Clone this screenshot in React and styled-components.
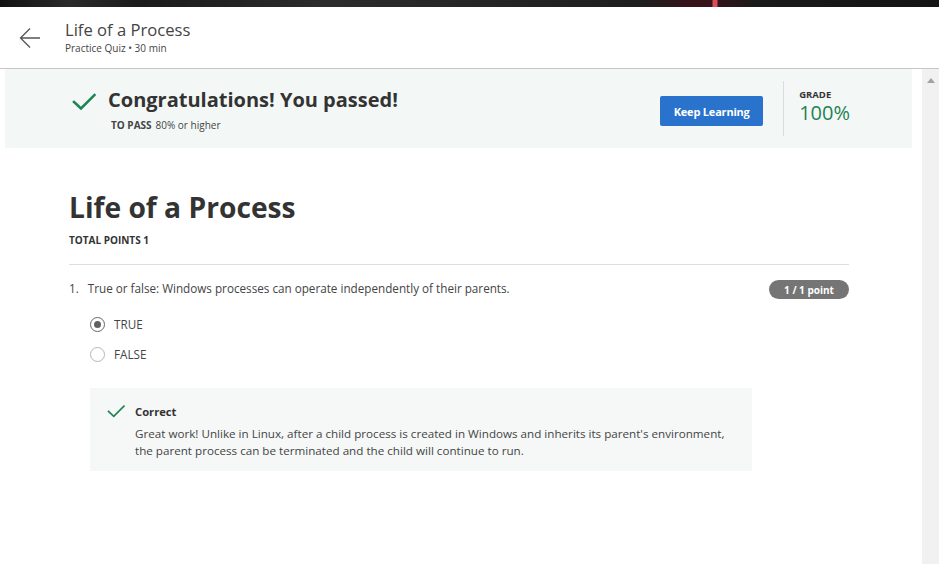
import React from 'react'
import styled, { createGlobalStyle } from 'styled-components'

const Global = createGlobalStyle`
  html, body {
    margin: 0;
    padding: 0;
    background: #fff;
  }
  body {
    width: 939px;
    height: 564px;
    overflow: hidden;
    font-family: 'Open Sans', 'Liberation Sans', sans-serif;
    color: #333;
  }
`

const Page = styled.div`
  display: flex;
  flex-direction: column;
  height: 564px;
`

const TopStrip = styled.div`
  height: 7px;
  flex: none;
  background:
    linear-gradient(90deg, transparent 0, transparent 712px, #e0485c 713px, #e0485c 717px, transparent 718px),
    linear-gradient(90deg, #111 0, #2a2a2a 70px, #1b1b1b 140px, #2c2c2c 330px, #1e1e1e 640px, #3a1218 700px, #1a1a1a 760px, #141414 100%);
`

const Header = styled.header`
  height: 61px;
  flex: none;
  display: flex;
  align-items: center;
  border-bottom: 1px solid #c6c6c6;
`

const BackButton = styled.button`
  width: 65px;
  height: 60px;
  padding: 0 0 0 19px;
  border: 0;
  background: none;
  display: flex;
  align-items: center;
  color: #555;
  cursor: pointer;
`

const HeaderText = styled.div`
  display: flex;
  flex-direction: column;
  margin-top: -2px;
`

const HeaderTitle = styled.div`
  font-size: 16.6px;
  line-height: 22px;
  font-weight: 400;
  color: #444;
`

const HeaderSub = styled.div`
  font-size: 10px;
  line-height: 13px;
  color: #444;
  margin-top: 1px;
`

const Body = styled.div`
  flex: 1;
  display: flex;
  min-height: 0;
`

const Content = styled.main`
  flex: 1;
  display: flex;
  flex-direction: column;
`

const Scrollbar = styled.div`
  width: 17px;
  flex: none;
  background: #f1f1f1;
  display: flex;
  justify-content: center;
  padding-top: 9px;
  box-sizing: border-box;
`

const ScrollArrow = styled.div`
  width: 0;
  height: 0;
  border-left: 4px solid transparent;
  border-right: 4px solid transparent;
  border-bottom: 5px solid #a3a3a3;
`

const Banner = styled.section`
  height: 79px;
  flex: none;
  margin: 0 10px 0 5px;
  background: #f3f8f6;
  display: flex;
  align-items: flex-start;
  padding: 0 62px 0 67px;
`

const PassBlock = styled.div`
  display: flex;
  align-items: flex-start;
  gap: 12px;
  margin-top: 18px;
`

const CheckWrap = styled.div`
  margin-top: 6px;
  display: flex;
`

const PassText = styled.div`
  display: flex;
  flex-direction: column;
`

const PassTitle = styled.div`
  font-size: 20px;
  line-height: 26px;
  font-weight: 700;
  color: #333;
`

const PassMeta = styled.div`
  font-size: 10px;
  line-height: 13px;
  color: #444;
  margin: 6px 0 0 3px;
  strong {
    font-weight: 700;
    margin-right: 4px;
  }
`

const RightBlock = styled.div`
  margin: 12px 0 0 auto;
  display: flex;
  align-items: flex-start;
`

const Button = styled.button`
  width: 103px;
  height: 30px;
  margin-top: 15px;
  border: 0;
  border-radius: 2px;
  background: #2a73cc;
  color: #fff;
  font-family: inherit;
  font-size: 11px;
  font-weight: 700;
  letter-spacing: -0.2px;
  cursor: pointer;
  padding: 0;
`

const VDivider = styled.div`
  width: 1px;
  height: 55px;
  background: #dcdcdc;
  margin: 0 15px 0 20px;
`

const Grade = styled.div`
  display: flex;
  flex-direction: column;
  margin-top: 7px;
`

const GradeLabel = styled.div`
  font-size: 9.5px;
  line-height: 13px;
  font-weight: 700;
  color: #333;
`

const GradeValue = styled.div`
  font-size: 20px;
  line-height: 20px;
  margin-top: 2px;
  color: #1f8354;
`

const Quiz = styled.section`
  width: 780px;
  margin-left: 69px;
  padding-top: 41px;
`

const QuizTitle = styled.h1`
  margin: 0;
  font-size: 28.2px;
  line-height: 36px;
  font-weight: 700;
  color: #333;
`

const TotalPoints = styled.div`
  margin-top: 9px;
  font-size: 10px;
  line-height: 13px;
  font-weight: 700;
  color: #333;
`

const Rule = styled.hr`
  margin: 17px 0 0;
  border: 0;
  border-top: 1px solid #dedede;
`

const QuestionRow = styled.div`
  display: flex;
  align-items: flex-start;
  margin-top: 15px;
`

const QuestionText = styled.div`
  font-size: 11.7px;
  line-height: 16px;
  color: #444;
  display: flex;
  gap: 9px;
`

const Badge = styled.span`
  margin-left: auto;
  width: 80px;
  height: 19px;
  border-radius: 10px;
  background: #757575;
  color: #fff;
  font-size: 10px;
  font-weight: 700;
  display: flex;
  align-items: center;
  justify-content: center;
`

const Options = styled.div`
  margin: 10px 0 0 21px;
  display: flex;
  flex-direction: column;
`

const Option = styled.label`
  height: 30px;
  display: flex;
  align-items: center;
  gap: 9px;
  font-size: 11.7px;
  color: #444;
`

const Radio = styled.span`
  width: 15px;
  height: 15px;
  box-sizing: border-box;
  border-radius: 50%;
  border: ${p => (p.$checked ? '1.5px solid #666' : '1px solid #b5b5b5')};
  display: flex;
  align-items: center;
  justify-content: center;
  &::after {
    content: '';
    width: 7px;
    height: 7px;
    border-radius: 50%;
    background: ${p => (p.$checked ? '#616161' : 'transparent')};
  }
`

const Feedback = styled.div`
  margin: 19px 0 0 21px;
  width: 662px;
  box-sizing: border-box;
  background: #f5f8f7;
  padding: 16px 10px 12px 17px;
  display: flex;
  gap: 10px;
`

const FeedbackText = styled.div`
  display: flex;
  flex-direction: column;
`

const FeedbackTitle = styled.div`
  font-size: 11.2px;
  line-height: 16px;
  font-weight: 700;
  color: #333;
`

const FeedbackBody = styled.p`
  margin: 5px 0 0;
  font-size: 11.65px;
  line-height: 17px;
  color: #444;
  white-space: nowrap;
`

const BackArrow = () => (
  <svg width="22" height="22" viewBox="0 0 22 22" fill="none" stroke="currentColor" strokeWidth="1.3">
    <path d="M21 11H1.5M11 1.5L1.5 11L11 20.5" />
  </svg>
)

const Check = ({ w, h, sw }) => (
  <svg width={w} height={h} viewBox="0 0 24 17" fill="none" stroke="#1f8354" strokeWidth={sw} strokeLinecap="square">
    <path d="M2 9L9 15.5L22.5 2" />
  </svg>
)

export default function App() {
  return (
    <Page>
      <Global />
      <TopStrip />
      <Header>
        <BackButton aria-label="Back">
          <BackArrow />
        </BackButton>
        <HeaderText>
          <HeaderTitle>Life of a Process</HeaderTitle>
          <HeaderSub>Practice Quiz • 30 min</HeaderSub>
        </HeaderText>
      </Header>
      <Body>
        <Content>
          <Banner>
            <PassBlock>
              <CheckWrap>
                <Check w={24} h={17} sw={2.6} />
              </CheckWrap>
              <PassText>
                <PassTitle>Congratulations! You passed!</PassTitle>
                <PassMeta>
                  <strong>TO PASS</strong>80% or higher
                </PassMeta>
              </PassText>
            </PassBlock>
            <RightBlock>
              <Button>Keep Learning</Button>
              <VDivider />
              <Grade>
                <GradeLabel>GRADE</GradeLabel>
                <GradeValue>100%</GradeValue>
              </Grade>
            </RightBlock>
          </Banner>
          <Quiz>
            <QuizTitle>Life of a Process</QuizTitle>
            <TotalPoints>TOTAL POINTS 1</TotalPoints>
            <Rule />
            <QuestionRow>
              <QuestionText>
                <span>1.</span>
                <span>True or false: Windows processes can operate independently of their parents.</span>
              </QuestionText>
              <Badge>1 / 1 point</Badge>
            </QuestionRow>
            <Options>
              <Option>
                <Radio $checked />
                TRUE
              </Option>
              <Option>
                <Radio />
                FALSE
              </Option>
            </Options>
            <Feedback>
              <Check w={18} h={14} sw={2.2} />
              <FeedbackText>
                <FeedbackTitle>Correct</FeedbackTitle>
                <FeedbackBody>
                  Great work! Unlike in Linux, after a child process is created in Windows and inherits its parent's environment,
                  <br />
                  the parent process can be terminated and the child will continue to run.
                </FeedbackBody>
              </FeedbackText>
            </Feedback>
          </Quiz>
        </Content>
        <Scrollbar>
          <ScrollArrow />
        </Scrollbar>
      </Body>
    </Page>
  )
}
